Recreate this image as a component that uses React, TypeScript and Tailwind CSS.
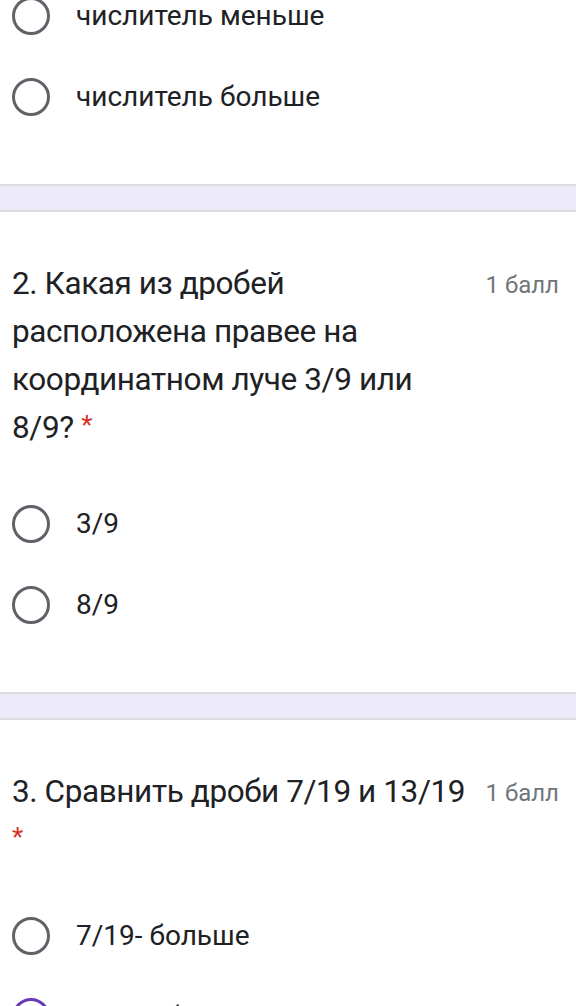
const font = { fontFamily: "Roboto, 'Noto Sans', sans-serif" };

type Question = {
  title: string;
  options: string[];
  selected?: number;
};

function Radio({ active }: { active?: boolean }) {
  return (
    <span
      className={
        "block h-[38px] w-[38px] shrink-0 rounded-full border-[3px] " +
        (active ? "border-[#673ab7]" : "border-[#5f6368]")
      }
    />
  );
}

function Option({ label, active }: { label: string; active?: boolean }) {
  return (
    <div className="flex h-[81px] items-center gap-[26px] pl-[12px]">
      <Radio active={active} />
      <span className="text-[28px] text-[#202124]">{label}</span>
    </div>
  );
}

function Divider() {
  return <div className="h-[28px] border-y-2 border-[#dadce0] bg-[#ece9f8]" />;
}

function QuestionCard({ q }: { q: Question }) {
  return (
    <section className="bg-white pt-[48px] pb-[47px]">
      <div className="flex items-start gap-[6px] pl-[12px] pr-[17px]">
        <h2 className="min-w-0 flex-1 text-[31.5px] leading-[48px] tracking-[-0.4px] text-[#202124]">
          {q.title} <span className="relative -top-[4px] text-[26px] text-[#d93025]">*</span>
        </h2>
        <span className="shrink-0 pt-[1px] text-[24px] leading-[48px] text-[#70757a]">1 балл</span>
      </div>
      <div className="mt-[30px]">
        {q.options.map((o, i) => (
          <Option key={o} label={o} active={q.selected === i} />
        ))}
      </div>
    </section>
  );
}

export default function App() {
  return (
    <div className="h-[1006px] overflow-hidden bg-white" style={font}>
      <section className="bg-white pb-[47px]">
        <div className="-mt-[25px]">
          <Option label="числитель меньше" />
          <Option label="числитель больше" />
        </div>
      </section>
      <Divider />
      <QuestionCard
        q={{
          title: "2. Какая из дробей расположена правее на координатном луче 3/9 или 8/9?",
          options: ["3/9", "8/9"],
        }}
      />
      <Divider />
      <QuestionCard
        q={{
          title: "3. Сравнить дроби 7/19 и 13/19",
          options: ["7/19- больше", "13/19- больше"],
          selected: 1,
        }}
      />
    </div>
  );
}
